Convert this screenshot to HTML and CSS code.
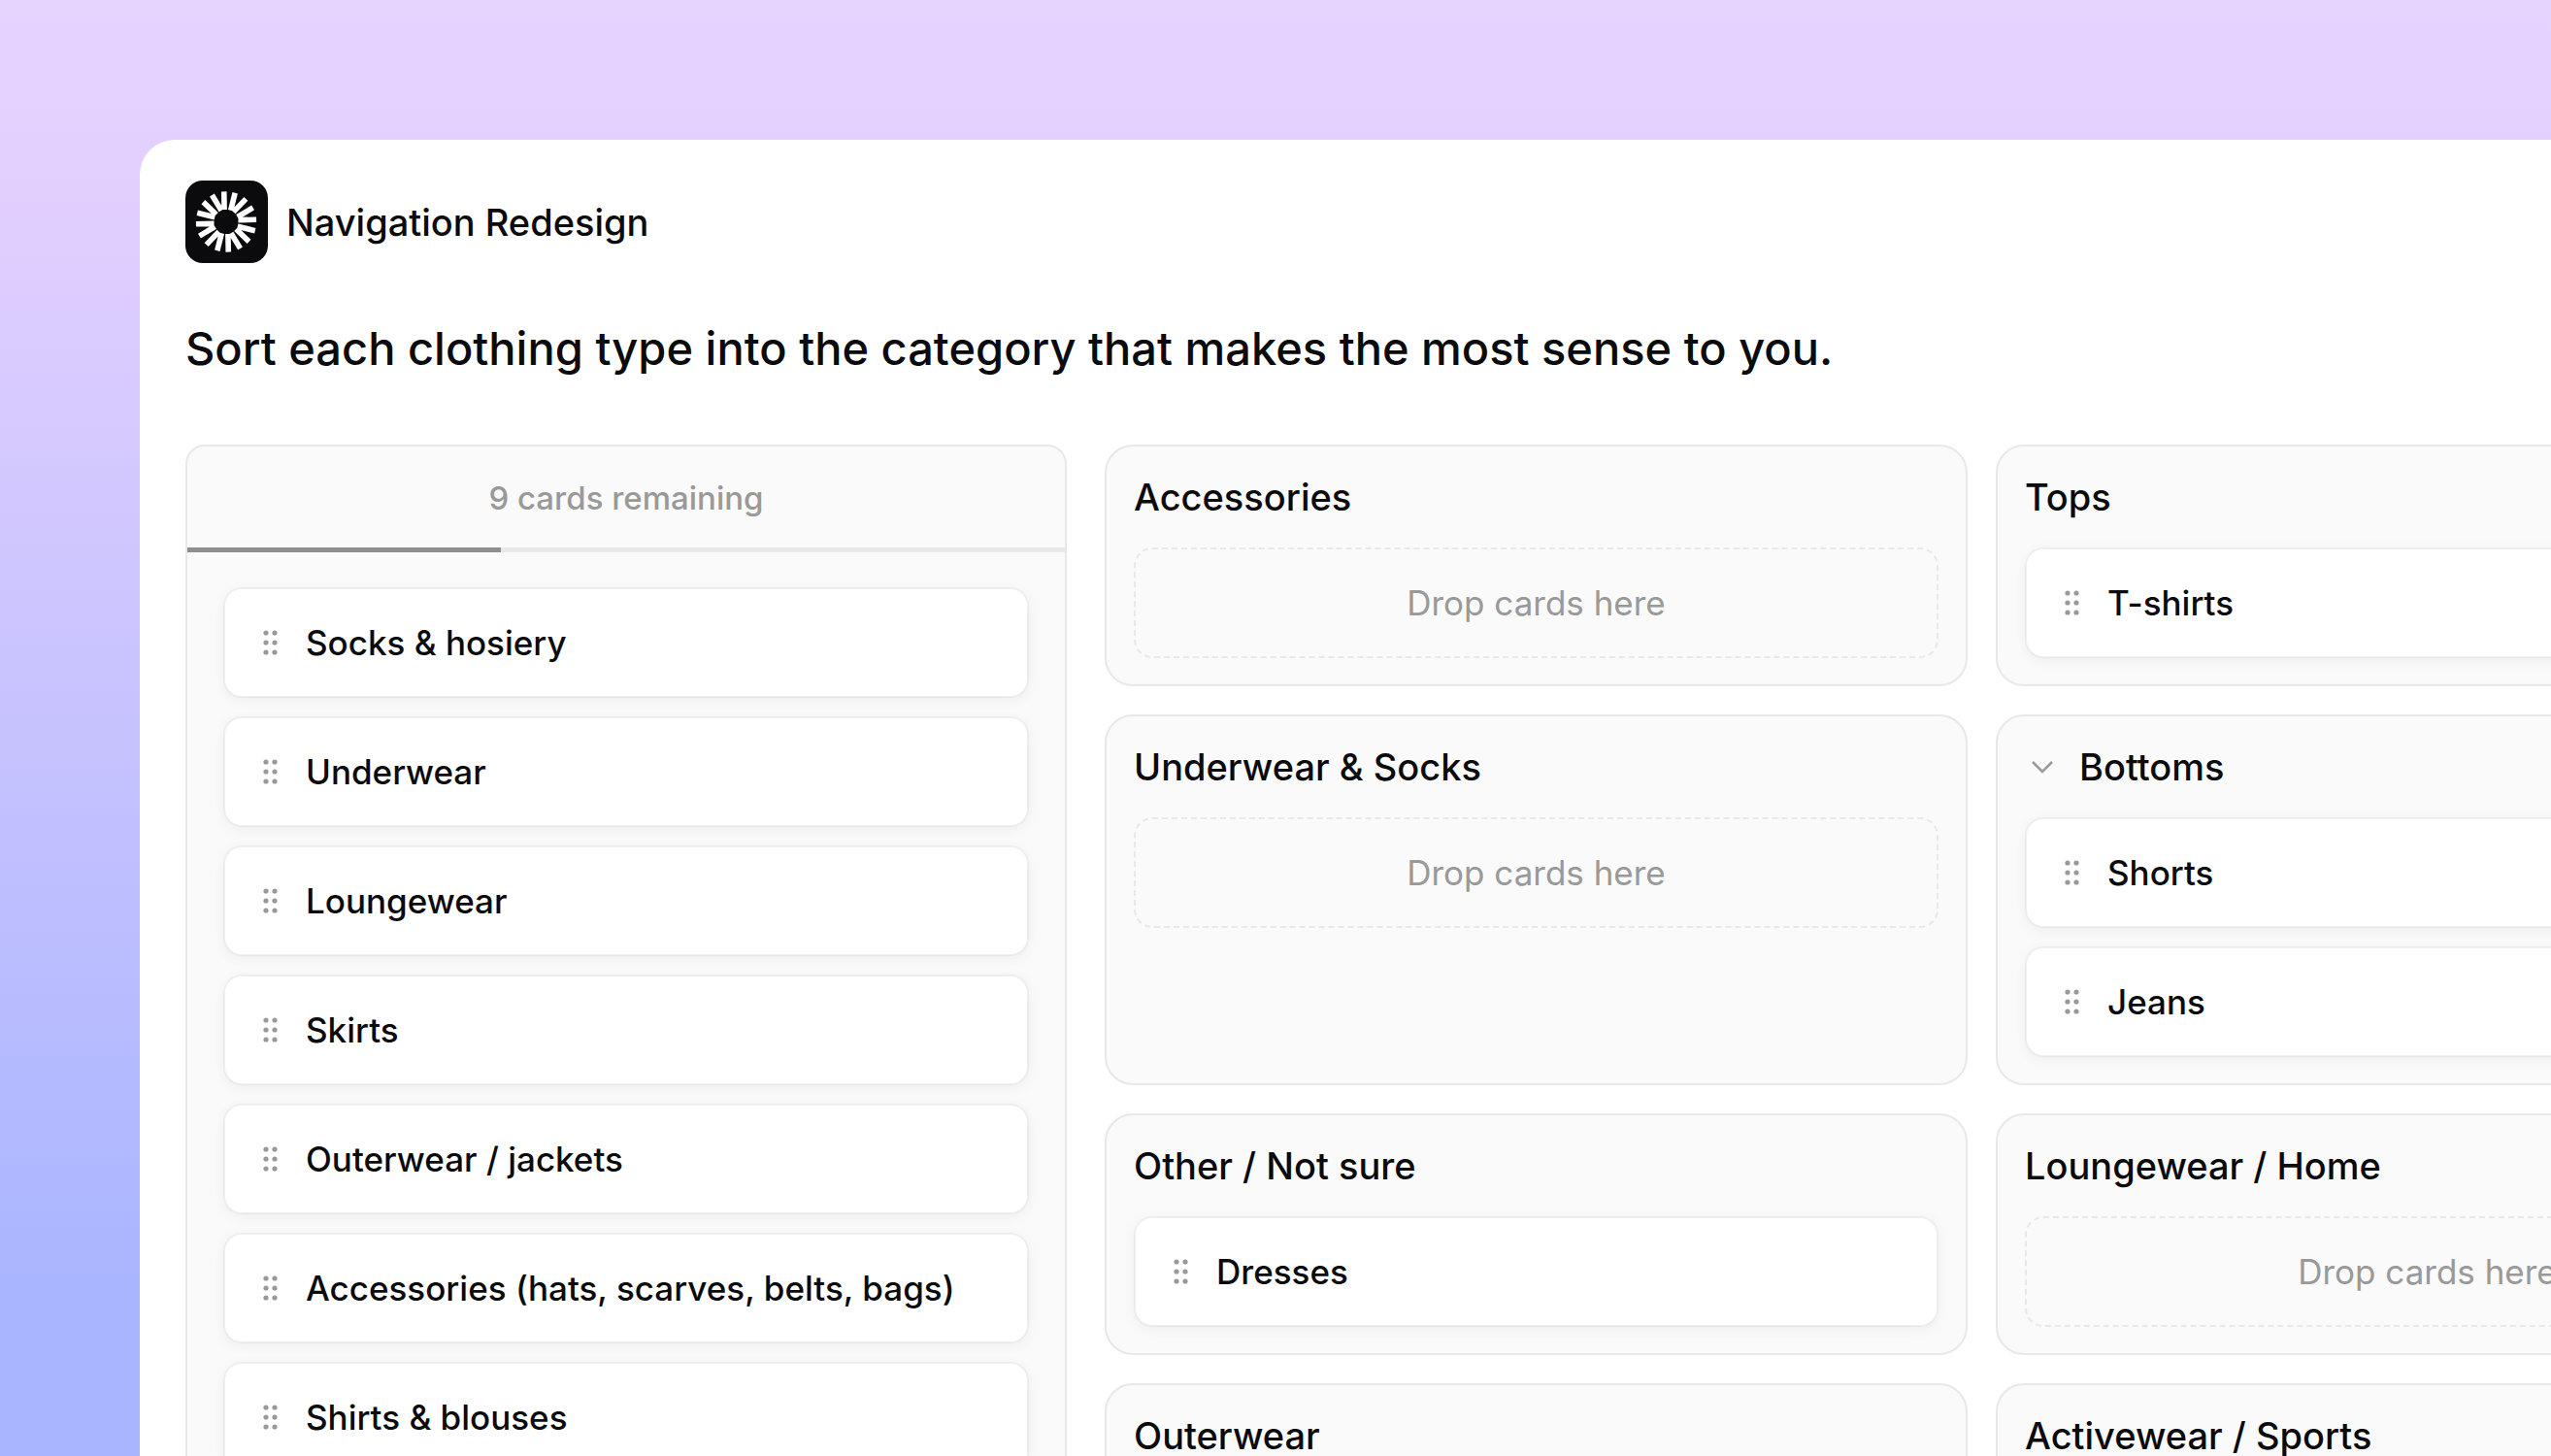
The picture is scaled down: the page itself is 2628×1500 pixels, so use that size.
FILE: index.html
```html
<!DOCTYPE html>
<html lang="en">
<head>
  <meta charset="UTF-8">
  <meta name="viewport" content="width=device-width, initial-scale=1.0">
  <title>Navigation Redesign</title>
  <link rel="stylesheet" href="styles.css">
</head>
<body>
  <svg class="defs" aria-hidden="true">
    <symbol id="grip" viewBox="0 0 16 28">
      <circle cx="4" cy="4" r="2.6"/><circle cx="13" cy="4" r="2.6"/>
      <circle cx="4" cy="14" r="2.6"/><circle cx="13" cy="14" r="2.6"/>
      <circle cx="4" cy="24" r="2.6"/><circle cx="13" cy="24" r="2.6"/>
    </symbol>
  </svg>

  <main class="window">
    <header class="brand">
      <svg class="logo" viewBox="0 0 85 85" aria-hidden="true">
        <defs>
          <path id="rays" d="M-1.6 -12.5 L-6.4 -30.5 M1.6 -12.5 L6.4 -30.5"/>
        </defs>
        <rect width="85" height="85" rx="18" fill="#0b0b0d"/>
        <g transform="translate(42 42.5) rotate(-16)" stroke="#fff" stroke-width="5.6">
          <use href="#rays"/>
          <use href="#rays" transform="rotate(45)"/>
          <use href="#rays" transform="rotate(90)"/>
          <use href="#rays" transform="rotate(135)"/>
          <use href="#rays" transform="rotate(180)"/>
          <use href="#rays" transform="rotate(225)"/>
          <use href="#rays" transform="rotate(270)"/>
          <use href="#rays" transform="rotate(315)"/>
        </g>
      </svg>
      <span class="brand-name">Navigation Redesign</span>
    </header>

    <h1>Sort each clothing type into the category that makes the most sense to you.</h1>

    <div class="board">
      <!-- Unsorted cards -->
      <section class="deck">
        <p class="remaining" id="remaining">9 cards remaining</p>
        <progress class="progress" value="5" max="14" aria-labelledby="remaining"></progress>
        <ul class="cards">
          <li class="card"><svg class="grip"><use href="#grip"/></svg>Socks &amp; hosiery</li>
          <li class="card"><svg class="grip"><use href="#grip"/></svg>Underwear</li>
          <li class="card"><svg class="grip"><use href="#grip"/></svg>Loungewear</li>
          <li class="card"><svg class="grip"><use href="#grip"/></svg>Skirts</li>
          <li class="card"><svg class="grip"><use href="#grip"/></svg>Outerwear / jackets</li>
          <li class="card"><svg class="grip"><use href="#grip"/></svg>Accessories (hats, scarves, belts, bags)</li>
          <li class="card"><svg class="grip"><use href="#grip"/></svg>Shirts &amp; blouses</li>
        </ul>
      </section>

      <!-- Categories -->
      <div class="categories">
        <section class="category">
          <h2>Accessories</h2>
          <div class="drop">Drop cards here</div>
        </section>
        <section class="category">
          <h2>Tops</h2>
          <ul class="cards">
            <li class="card"><svg class="grip"><use href="#grip"/></svg>T-shirts</li>
          </ul>
        </section>
        <section class="category">
          <h2>Underwear &amp; Socks</h2>
          <div class="drop">Drop cards here</div>
        </section>
        <section class="category">
          <h2>
            <button class="toggle" aria-expanded="true">
              <svg class="chevron" viewBox="0 0 36 36" aria-hidden="true"><path d="M8 13 L18 23 L28 13"/></svg>
              Bottoms
            </button>
          </h2>
          <ul class="cards">
            <li class="card"><svg class="grip"><use href="#grip"/></svg>Shorts</li>
            <li class="card"><svg class="grip"><use href="#grip"/></svg>Jeans</li>
          </ul>
        </section>
        <section class="category">
          <h2>Other / Not sure</h2>
          <ul class="cards">
            <li class="card"><svg class="grip"><use href="#grip"/></svg>Dresses</li>
          </ul>
        </section>
        <section class="category">
          <h2>Loungewear / Home</h2>
          <div class="drop">Drop cards here</div>
        </section>
        <section class="category">
          <h2>Outerwear</h2>
        </section>
        <section class="category">
          <h2>Activewear / Sports</h2>
        </section>
      </div>
    </div>
  </main>
</body>
</html>
```
FILE: styles.css
```css
* {
  box-sizing: border-box;
}
body {
  margin: 0;
  height: 100vh;
  overflow: hidden;
  padding: 144px 0 0 144px;
  font-family: Inter, "Liberation Sans", sans-serif;
  font-size: 35px;
  font-weight: 500;
  color: #0b0b0d;
  background: linear-gradient(#e6d4ff 0%, #e2cffe 13%, #a9b5ff 89%);
}
h1, h2, p, ul {
  margin: 0;
  padding: 0;
  font-weight: 500;
}
.defs {
  position: absolute;
  width: 0;
  height: 0;
}
/* the window runs off the right and bottom edges */
.window {
  height: 100%;
  padding: 42px 0 0 47px;
  background: #fff;
  border-top-left-radius: 36px;
  overflow: hidden;
}
.brand {
  display: flex;
  align-items: center;
  gap: 19px;
  font-size: 38px;
  line-height: 44px;
}
.logo {
  width: 85px;
  height: 85px;
}
h1 {
  margin: 58px 0 70px;
  font-size: 47px;
  line-height: 59px;
}
.board {
  display: grid;
  grid-template-columns: 908px 1fr;
  gap: 39px;
  margin-right: -317px;
}
.deck {
  background: #fafafa;
  border: 2px solid #e8e8e8;
  border-radius: 20px;
}
.remaining {
  padding: 30px 0 28px;
  font-size: 33px;
  line-height: 46px;
  text-align: center;
  color: #999;
}
.progress {
  display: block;
  width: 100%;
  height: 5px;
  border: 0;
  background: #e8e8e8;
  appearance: none;
}
.progress::-webkit-progress-bar {
  background: #e8e8e8;
}
.progress::-webkit-progress-value {
  background: #8f8f8f;
}
.cards {
  display: flex;
  flex-direction: column;
  gap: 19px;
  list-style: none;
}
.deck .cards {
  padding: 36px 37px;
}
.card {
  display: flex;
  align-items: center;
  height: 114px;
  gap: 29px;
  padding: 0 38px;
  line-height: 42px;
  background: #fff;
  background-clip: padding-box;
  border: 2px solid rgba(0, 0, 0, 0.04);
  border-radius: 19px;
  box-shadow: 0 3px 13px rgba(0, 0, 0, 0.05);
}
.grip {
  width: 16px;
  height: 28px;
  fill: #999;
}
.categories {
  display: grid;
  grid-template-columns: 1fr 1fr;
  gap: 29px;
}
.category {
  padding: 28px 28px 27px;
  background: #fafafa;
  border: 2px solid #e8e8e8;
  border-radius: 29px;
}
.category h2 {
  margin-bottom: 28px;
  font-size: 38px;
  line-height: 48px;
}
.toggle {
  display: flex;
  align-items: center;
  gap: 20px;
  padding: 0;
  border: 0;
  background: none;
  font: inherit;
  color: inherit;
}
.chevron {
  width: 36px;
  height: 36px;
  fill: none;
  stroke: #999;
  stroke-width: 2.5;
}
.drop {
  display: flex;
  align-items: center;
  justify-content: center;
  height: 114px;
  line-height: 42px;
  font-weight: 400;
  color: #999;
  border: 2px dashed #e8e8e8;
  border-radius: 19px;
}
```
